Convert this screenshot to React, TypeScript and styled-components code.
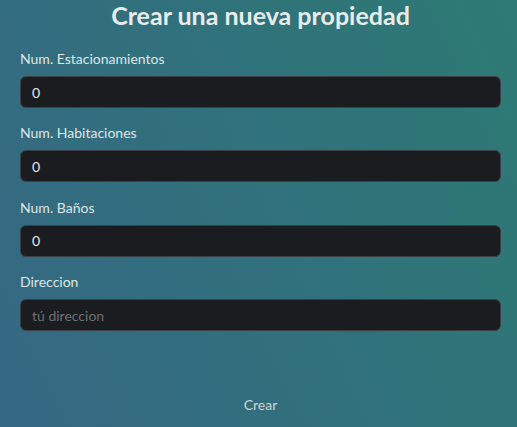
import React from 'react';
import styled, { createGlobalStyle } from 'styled-components';

const GlobalStyle = createGlobalStyle`
  html, body {
    margin: 0;
    padding: 0;
  }
  body {
    font-family: Lato, "Open Sans", sans-serif;
  }
`;

const Page = styled.div`
  width: 517px;
  height: 427px;
  box-sizing: border-box;
  background: linear-gradient(65deg, #366884 0%, #31707d 45%, #2e7a74 100%);
  padding: 0 16px 0 20px;
  display: flex;
  flex-direction: column;
`;

const Title = styled.h1`
  margin: 0;
  padding-top: 1px;
  text-align: center;
  font-size: 25px;
  line-height: 28px;
  font-weight: 700;
  color: #e8eceb;
`;

const Form = styled.form`
  display: flex;
  flex-direction: column;
  gap: 16.4px;
  margin-top: 21px;
  flex: 1;
`;

const Field = styled.div`
  display: flex;
  flex-direction: column;
  gap: 8px;
`;

const Label = styled.label`
  font-size: 14px;
  line-height: 18px;
  color: #dfe6e6;
`;

const Input = styled.input`
  box-sizing: border-box;
  height: 32px;
  width: 100%;
  border: 1px solid #3b4046;
  border-radius: 6px;
  background: #1b1c1f;
  color: #e6e8ea;
  font-family: inherit;
  font-size: 14px;
  padding: 0 11px;
  outline: none;

  &::placeholder {
    color: #6c7075;
  }
`;

const Actions = styled.div`
  display: flex;
  justify-content: center;
  margin-top: auto;
  padding-bottom: 14px;
`;

const SubmitButton = styled.button`
  background: transparent;
  border: none;
  color: #c9d3d3;
  font-family: inherit;
  font-size: 14px;
  padding: 0;
  cursor: pointer;
`;

const fields = [
  { label: 'Num. Estacionamientos', value: '0' },
  { label: 'Num. Habitaciones', value: '0' },
  { label: 'Num. Baños', value: '0' },
  { label: 'Direccion', value: '', placeholder: 'tú direccion' },
];

export default function App() {
  return (
    <>
      <GlobalStyle />
      <Page>
        <Title>Crear una nueva propiedad</Title>
        <Form onSubmit={e => e.preventDefault()}>
          {fields.map(f => (
            <Field key={f.label}>
              <Label>{f.label}</Label>
              <Input defaultValue={f.value} placeholder={f.placeholder} />
            </Field>
          ))}
          <Actions>
            <SubmitButton type="submit">Crear</SubmitButton>
          </Actions>
        </Form>
      </Page>
    </>
  );
}
